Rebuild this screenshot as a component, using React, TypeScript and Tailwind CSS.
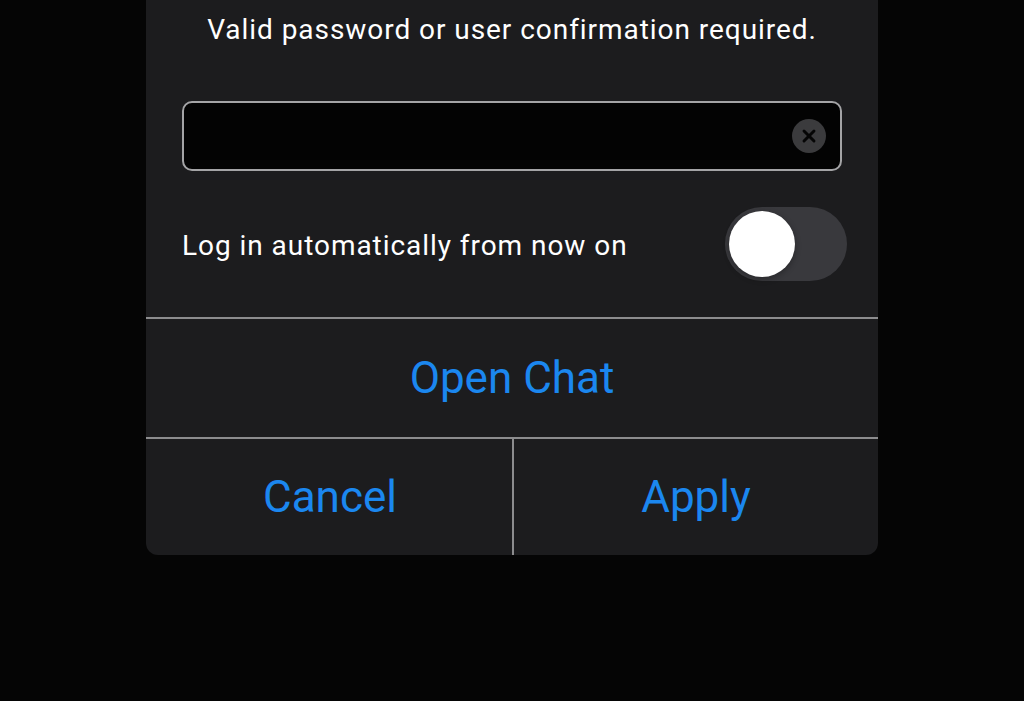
import { X } from "lucide-react";

const font = { fontFamily: "Roboto, 'Noto Sans', sans-serif" };

export default function App() {
  return (
    <div className="flex h-[701px] w-[1024px] justify-center overflow-hidden bg-[#050505]" style={font}>
      <div className="flex h-[555px] w-[732px] flex-col rounded-b-[12px] bg-[#1c1c1e]">
        <p className="pt-[12px] text-center text-[28px] leading-[36px] tracking-[0.95px] text-white">
          Valid password or user confirmation required.
        </p>

        <div className="mx-[36px] mt-[53px] flex h-[70px] items-center justify-end rounded-[10px] border-2 border-[#a4a4a6] bg-[#030303] pr-[14px]">
          <span className="flex h-[34px] w-[34px] items-center justify-center rounded-full bg-[#3b3b3d]">
            <X className="h-[20px] w-[20px] text-[#050505]" strokeWidth={3.5} />
          </span>
        </div>

        <div className="mt-[36px] flex items-center justify-between pl-[36px] pr-[31px]">
          <span className="pt-[3px] text-[28px] leading-[36px] tracking-[0.95px] text-white">Log in automatically from now on</span>
          <div className="flex h-[74px] w-[122px] items-center rounded-full bg-[#39393d] px-[4px]">
            <div className="h-[66px] w-[66px] rounded-full bg-white shadow-[0_2px_6px_rgba(0,0,0,0.3)]" />
          </div>
        </div>

        <div className="mt-[36px] flex h-[120px] items-center justify-center border-t-2 border-[#8c8c8e]">
          <span className="text-[44px] leading-none text-[#1b87ef]">Open Chat</span>
        </div>

        <div className="flex flex-1 border-t-2 border-[#8c8c8e]">
          <div className="flex flex-1 items-center justify-center border-r-2 border-[#8c8c8e] pl-[2px]">
            <span className="text-[44px] leading-none text-[#1b87ef]">Cancel</span>
          </div>
          <div className="flex flex-1 items-center justify-center">
            <span className="text-[44px] leading-none text-[#1b87ef]">Apply</span>
          </div>
        </div>
      </div>
    </div>
  );
}
